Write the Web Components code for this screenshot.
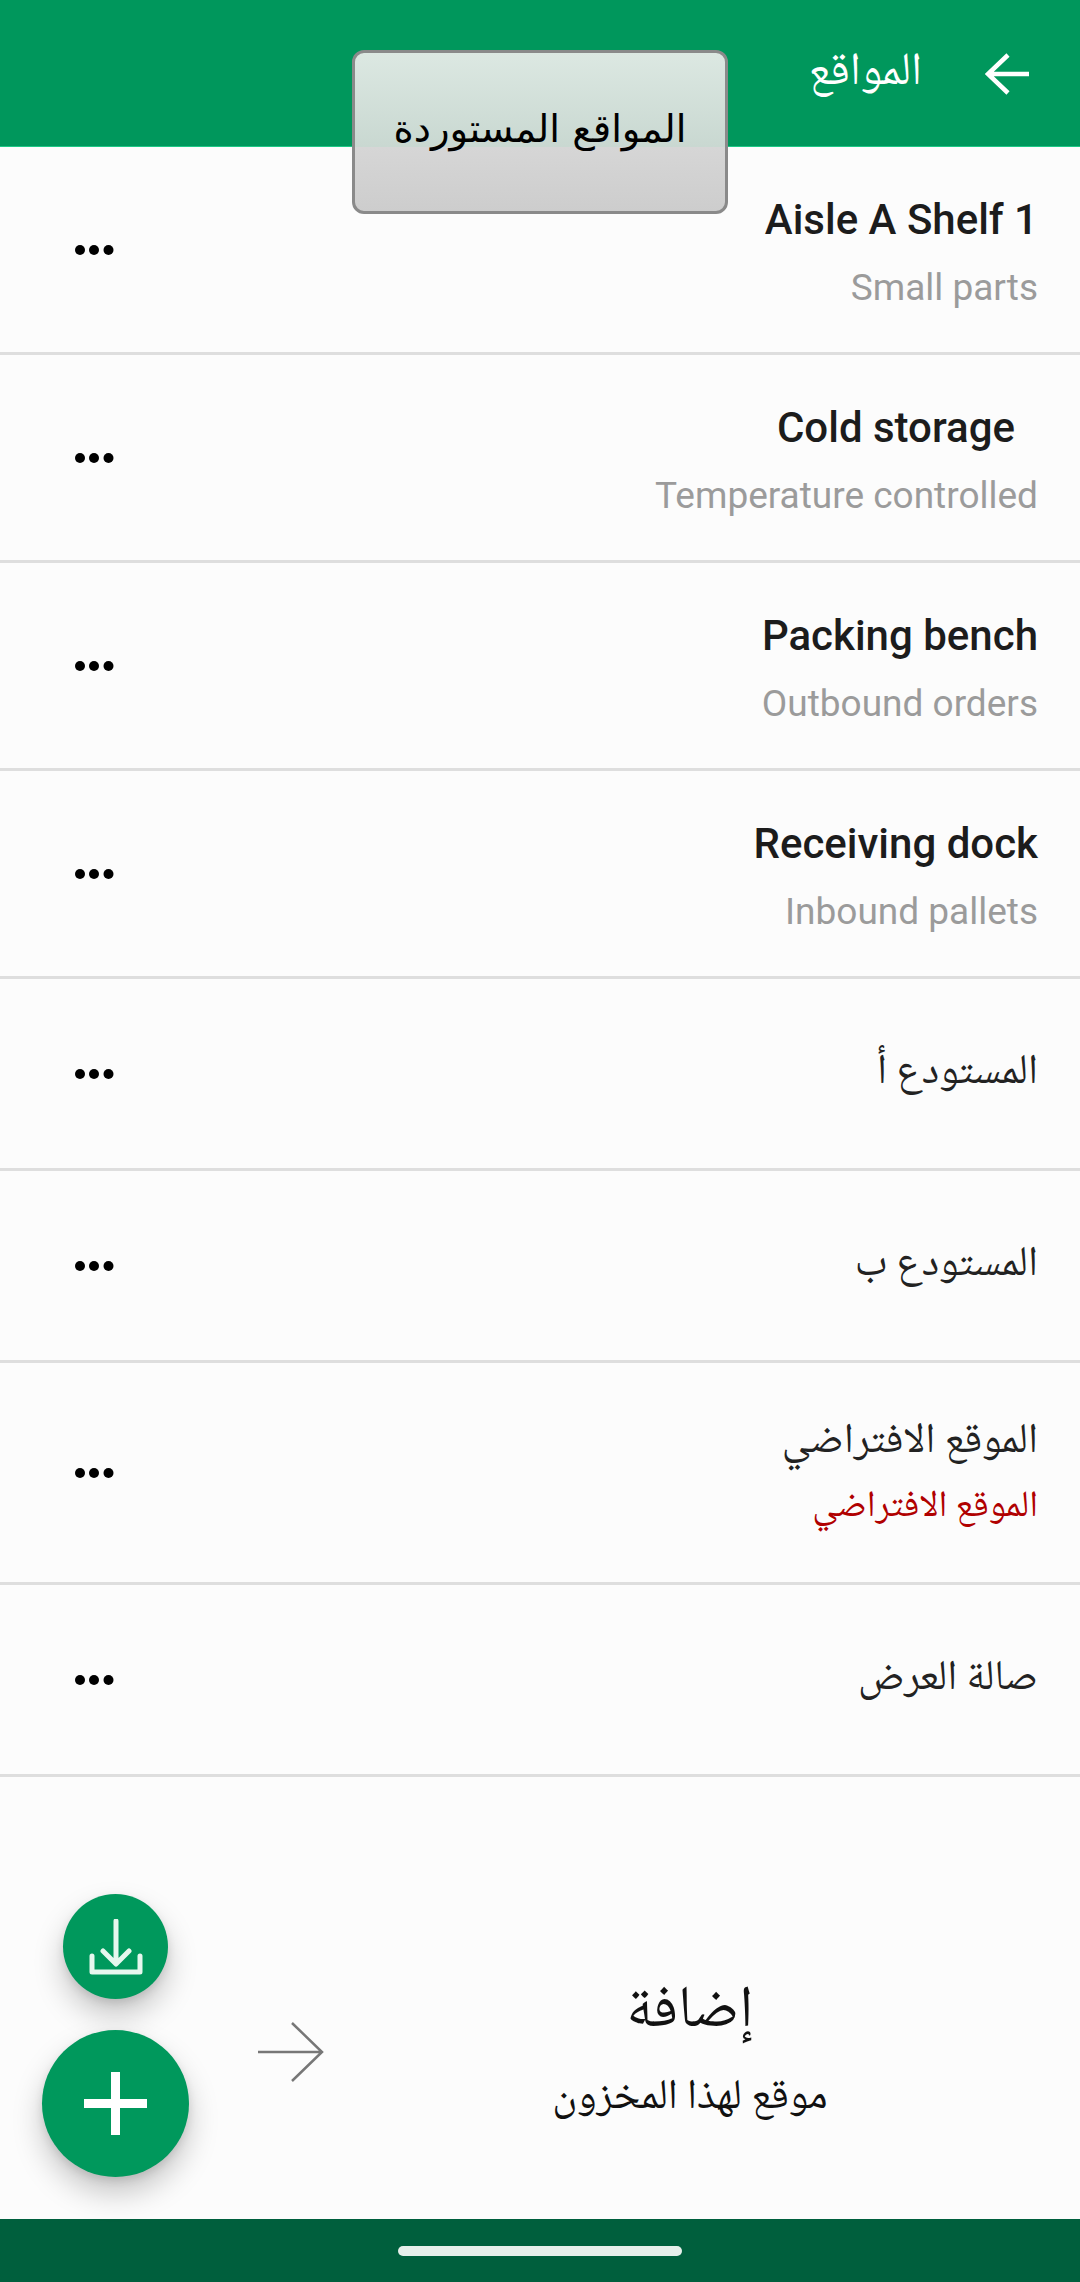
<!DOCTYPE html>
<html lang="ar" dir="rtl"><head><meta charset="utf-8">
<style>
html,body{margin:0;padding:0;height:2282px;width:1080px;overflow:hidden;background:#fcfcfc}
body{font-family:"Roboto","Noto Naskh Arabic",sans-serif;display:flex;flex-direction:column}
</style></head><body>
<app-bar title="المواقع"></app-bar>
<import-button>المواقع المستوردة</import-button>
<main style="flex:1;display:flex;flex-direction:column;min-height:0">
<loc-row name="Aisle A Shelf 1" sub="Small parts" latin></loc-row>
<loc-row name="Cold storage" sub="Temperature controlled" latin indent></loc-row>
<loc-row name="Packing bench" sub="Outbound orders" latin></loc-row>
<loc-row name="Receiving dock" sub="Inbound pallets" latin></loc-row>
<loc-row name="المستودع أ"></loc-row>
<loc-row name="المستودع ب"></loc-row>
<loc-row name="الموقع الافتراضي" sub="الموقع الافتراضي" def></loc-row>
<loc-row name="صالة العرض"></loc-row>
<add-hint></add-hint>
</main>
<fab-stack></fab-stack>
<nav-bar></nav-bar>
<script>
const AR='"Noto Naskh Arabic","DejaVu Sans",sans-serif';
function def(name,html,init){customElements.define(name,class extends HTMLElement{constructor(){super();const s=this.attachShadow({mode:'open'});s.innerHTML=html;}connectedCallback(){init&&init(this,this.shadowRoot);}});}
def('app-bar',`<style>:host{display:flex;flex:none;height:147px;background:#00975c;color:#fff;align-items:flex-start;box-sizing:border-box;padding:53px 51px 0 0;gap:63px;font:46px ${AR};border-bottom:1px solid #1dc886}
svg{display:block;width:44px;height:42px;flex:none}#t{line-height:42px}</style>
<svg viewBox="0 0 44 42" fill="none" stroke="#fff" stroke-width="4.5"><path d="M44 21H3M23 2 3 21l20 19"/></svg><span id="t"></span>`,(h,s)=>{s.getElementById('t').textContent=h.getAttribute('title')});
def('import-button',`<style>:host{position:absolute;left:352px;top:50px;width:376px;height:164px;box-sizing:border-box;border:3px solid #8a8a8a;border-radius:12px;background:linear-gradient(#dce8e2 0,#c9d8d1 94px,#d6d6d6 94px,#cdcdcd 100%);display:flex;align-items:center;justify-content:center;font:38.500px "DejaVu Sans",sans-serif;color:#000;z-index:3;padding-bottom:8px}</style><slot></slot>`);
def('loc-row',`<style>:host{display:flex;flex:none;height:192px;box-sizing:border-box;border-bottom:3px solid #dedede;align-items:center;justify-content:space-between;padding:0 42px 0 0}
:host([latin]){height:208px}:host([def]){height:222px}
#txt{display:flex;flex-direction:column;align-items:flex-start}
#n{font:42px/56px ${AR};color:#222;margin-top:1px}
#s{font:37px/46px ${AR};color:#9b9b9b;margin-top:20px}
:host([latin]) #n{font:500 42px/50px Roboto,sans-serif;color:#1c1c1c;margin-top:6px}
:host([latin]) #s{font:37px/46px Roboto,sans-serif;margin-top:20px}
:host([def]) #n{margin-top:0}
:host([def]) #s{color:#b00000;margin-top:14px}
:host([indent]) #n{margin-right:23px}
svg{width:40px;height:12px;margin-left:74px;flex:none}</style>
<div id="txt"><div id="n"></div><div id="s"></div></div>
<svg viewBox="0 0 40 12" fill="#000"><circle cx="6" cy="6" r="5"/><circle cx="20" cy="6" r="5"/><circle cx="34.500" cy="6" r="5"/></svg>`,(h,s)=>{s.getElementById('n').textContent=h.getAttribute('name');const x=s.getElementById('s');if(h.hasAttribute('sub'))x.textContent=h.getAttribute('sub');else x.remove();});
def('add-hint',`<style>:host{flex:1;display:flex;align-items:flex-end;justify-content:flex-end;padding:0 0 95px 0}
#w{display:flex;align-items:center;direction:ltr}
svg{width:66px;height:60px;flex:none;margin-left:258px;margin-right:216px}
#c{display:flex;flex-direction:column;align-items:center;width:300px;direction:rtl;margin-right:240px}
#a{font:59px/66px ${AR};color:#111}#b{font:42px/50px ${AR};color:#111;margin-top:28px}</style>
<div id="w"><svg viewBox="0 0 66 60" fill="none" stroke="#777" stroke-width="2.500"><path d="M0 30H64M34 1 64 30 34 59"/></svg><div id="c"><div id="a">إضافة</div><div id="b">موقع لهذا المخزون</div></div></div>`);
def('fab-stack',`<style>:host{position:absolute;left:42px;top:1894px;width:147px;display:flex;flex-direction:column;align-items:center;gap:31px;z-index:2}
.f{border-radius:50%;background:#00985c;display:flex;align-items:center;justify-content:center;box-shadow:0 16px 30px rgba(0,0,0,.22),0 4px 8px rgba(0,0,0,.1)}
.s{width:105px;height:105px}.l{width:147px;height:147px}</style>
<div class="f s"><svg width="56" height="56" viewBox="0 0 56 56" fill="none" stroke="#e6f7ee" stroke-width="5" stroke-linecap="round" stroke-linejoin="round"><path d="M28 2V44M15 32 28 45 41 32M4 37V53H52V37"/></svg></div>
<div class="f l"><svg width="63" height="63" viewBox="0 0 63 63" fill="#fff"><path d="M27 0h9v27h27v9H36v27h-9V36H0v-9h27z"/></svg></div>`);
def('nav-bar',`<style>:host{display:flex;flex:none;height:63px;background:#005f3d;justify-content:center;padding-top:27px;box-sizing:border-box}i{display:block;width:284px;height:10px;border-radius:5px;background:#e6efeb}</style><i></i>`);
</script>
</body></html>
